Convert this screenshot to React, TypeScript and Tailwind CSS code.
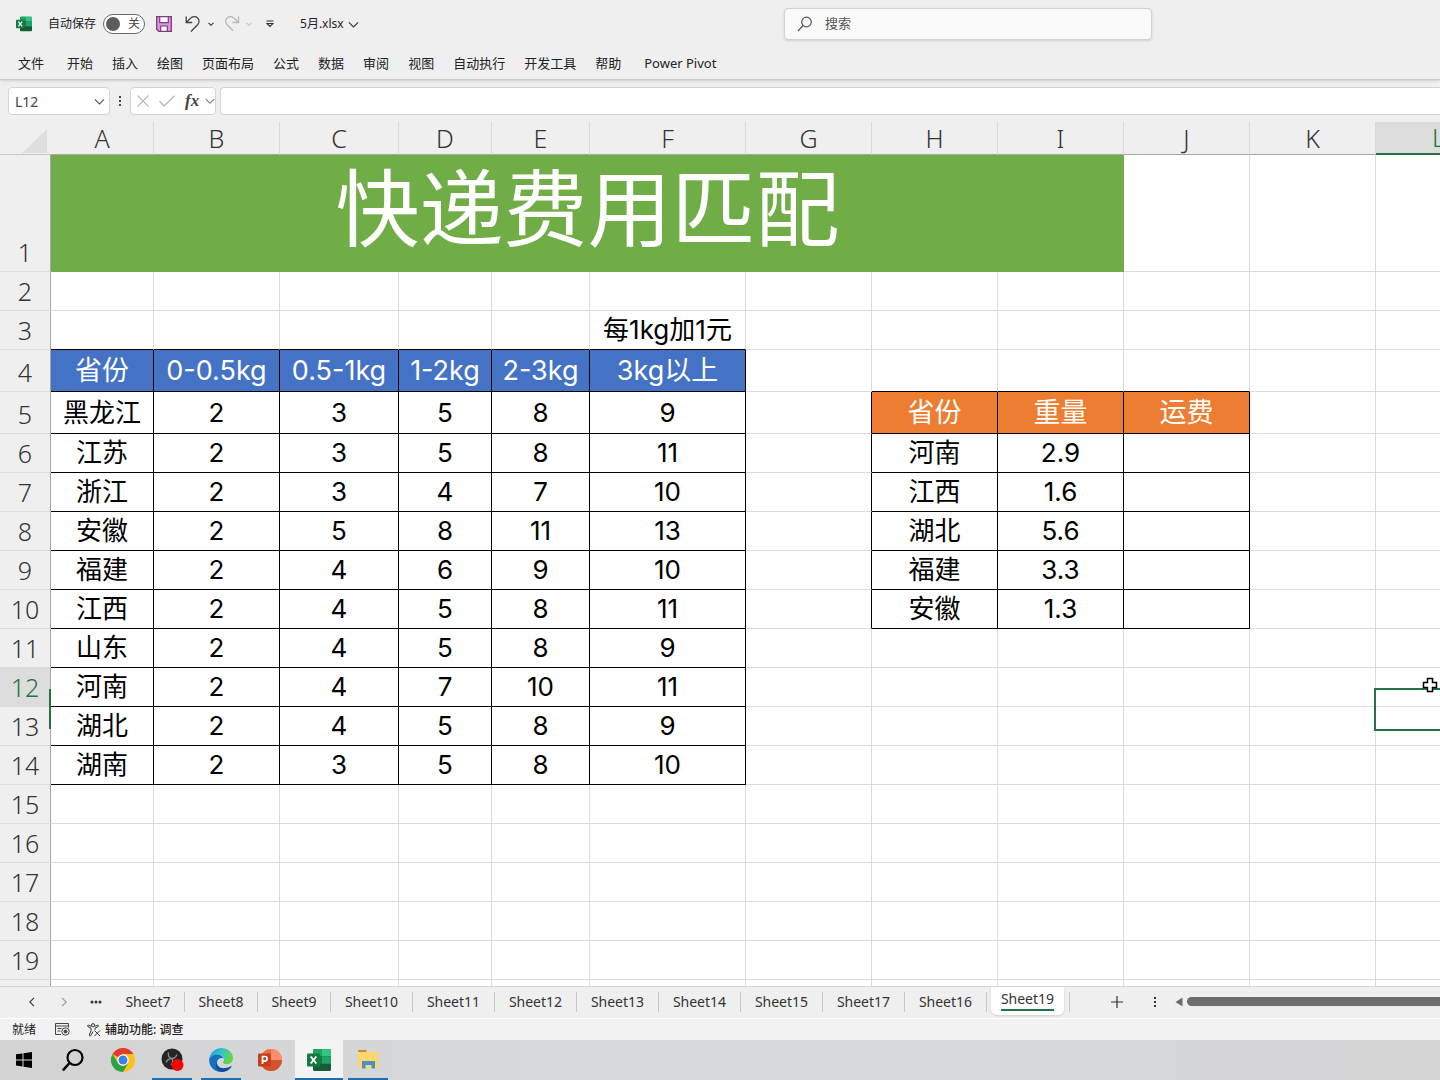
import React, { useState } from "react";

const MENUS = ["开始", "插入", "绘图", "页面布局", "公式", "数据", "审阅", "视图", "自动执行", "开发工具", "帮助"];

const COLUMNS = [
  { name: "A", width: "w-[103px]" },
  { name: "B", width: "w-[126px]" },
  { name: "C", width: "w-[119px]" },
  { name: "D", width: "w-[93px]" },
  { name: "E", width: "w-[98px]" },
  { name: "F", width: "w-[156px]" },
  { name: "G", width: "w-[126px]" },
  { name: "H", width: "w-[126px]" },
  { name: "I", width: "w-[126px]" },
  { name: "J", width: "w-[126px]" },
  { name: "K", width: "w-[126px]" },
  { name: "L", width: "w-[126px]" },
];

const PRICE_HEADER = ["省份", "0-0.5kg", "0.5-1kg", "1-2kg", "2-3kg", "3kg以上"];

// starts at row 5
const PRICES = [
  ["黑龙江", "2", "3", "5", "8", "9"],
  ["江苏", "2", "3", "5", "8", "11"],
  ["浙江", "2", "3", "4", "7", "10"],
  ["安徽", "2", "5", "8", "11", "13"],
  ["福建", "2", "4", "6", "9", "10"],
  ["江西", "2", "4", "5", "8", "11"],
  ["山东", "2", "4", "5", "8", "9"],
  ["河南", "2", "4", "7", "10", "11"],
  ["湖北", "2", "4", "5", "8", "9"],
  ["湖南", "2", "3", "5", "8", "10"],
];

// starts at row 5, column H
const ORDERS = [
  ["省份", "重量", "运费"],
  ["河南", "2.9", ""],
  ["江西", "1.6", ""],
  ["湖北", "5.6", ""],
  ["福建", "3.3", ""],
  ["安徽", "1.3", ""],
];

const SHEETS = ["Sheet7", "Sheet8", "Sheet9", "Sheet10", "Sheet11", "Sheet12", "Sheet13", "Sheet14", "Sheet15", "Sheet17", "Sheet16", "Sheet19"];

function ExcelLogo({ size }: { size: number }) {
  return (
    <svg width={size} height={size} viewBox="0 0 24 24" aria-hidden="true">
      <rect x="6" y="1" width="18" height="22" rx="1.500" fill="#185c37" />
      <path d="M7.500 1H15v7.300H6V2.500A1.500 1.500 0 0 1 7.500 1z" fill="#21a366" />
      <path d="M15 1h7.500A1.500 1.500 0 0 1 24 2.500v5.800h-9z" fill="#33c481" />
      <path d="M6 8.300h9v7.400H6z" fill="#107c41" />
      <path d="M15 8.300h9v7.400h-9z" fill="#21a366" />
      <rect x="0" y="5.500" width="13" height="13" rx="1.200" fill="#107c41" />
      <path d="M3.700 8.500l5.600 7M9.300 8.500l-5.600 7" stroke="#fff" strokeWidth="1.900" />
    </svg>
  );
}

function Chevron({ width, stroke = "#333" }: { width: number; stroke?: string }) {
  return (
    <svg width={width} height={width} viewBox="0 0 10 10" fill="none" aria-hidden="true">
      <path d="M.8 3l4.200 4.200L9.200 3" stroke={stroke} strokeWidth={11 / width} />
    </svg>
  );
}

function TitleBar() {
  const [autoSave, setAutoSave] = useState(false);

  return (
    <div className="flex h-12 items-center">
      <div className="flex w-[784px] shrink-0 items-center pl-4">
        <ExcelLogo size={16} />
        <label htmlFor="autosave" className="ml-4 text-[12px]">
          自动保存
        </label>
        <span className="ml-[7px] flex h-5 w-[42px] items-center justify-between rounded-full border border-[#666] bg-white pr-1 pl-0.5">
          <input
            id="autosave"
            type="checkbox"
            checked={autoSave}
            onChange={(e) => setAutoSave(e.target.checked)}
            className="size-[14px] appearance-none rounded-full bg-[#5d5d5d]"
          />
          <span className="text-[12px] text-[#444]">关</span>
        </span>
        <button aria-label="保存" className="ml-[11px]">
          <svg width="16" height="16" viewBox="0 0 16 16" fill="none">
            <path d="M.7.700h14.600v14.600H2.800L.7 13.200z" fill="#d79ae0" stroke="#80397b" strokeWidth="1.300" />
            <path d="M3.700.700h8.600v6H3.700zM4.700 10h6.600v5.300H4.700z" fill="#fff" stroke="#80397b" strokeWidth="1.200" />
          </svg>
        </button>
        <button aria-label="撤消" className="ml-[13px] flex items-center gap-[7px]">
          <svg width="16" height="18" viewBox="0 0 16 18" fill="none" stroke="#444" strokeWidth="1.300">
            <path d="M1.200 1.500v6h6M1.400 7.300l4-3.900c2.200-2.100 5.300-2.200 7.200-.4s1.900 4.700 0 6.700L6 16.500" />
          </svg>
          <Chevron width={6} />
        </button>
        <button aria-label="恢复" className="ml-2.5 flex items-center gap-1.5">
          <svg width="16" height="18" viewBox="0 0 16 18" fill="none" stroke="#b5b5b5" strokeWidth="1.300">
            <path d="M14.500 1.500v6h-6M14.300 7.300l-4-3.900C8.100 1.300 5 1.200 3.100 3s-1.900 4.700 0 6.700L9 15.800" />
          </svg>
          <Chevron width={6} stroke="#c4c4c4" />
        </button>
        <button aria-label="自定义快速访问工具栏" className="ml-3.5">
          <svg width="8" height="8" viewBox="0 0 8 8" fill="none" stroke="#333" strokeWidth="1.100">
            <path d="M.5 1h7M1 3.500l3 3 3-3z" />
          </svg>
        </button>
        <button className="ml-[26px] flex items-center gap-1 text-[12px] text-[#222]">
          5月.xlsx
          <Chevron width={11} />
        </button>
      </div>
      <div className="flex h-8 w-[368px] items-center rounded-sm border border-[#d2d2d2] bg-[#fafafa] pl-3 shadow-sm">
        <svg width="16" height="16" viewBox="0 0 16 16" fill="none" stroke="#555" strokeWidth="1.200" aria-hidden="true">
          <circle cx="9.500" cy="6" r="4.800" />
          <path d="M6 9.500L1 15" />
        </svg>
        <input
          aria-label="搜索"
          placeholder="搜索"
          className="ml-3 min-w-0 flex-1 text-[13px] outline-none placeholder:text-[#555]"
        />
      </div>
    </div>
  );
}

function MenuBar() {
  return (
    <nav className="flex h-[31px] items-center gap-[19px] pl-[18px] text-[13px] whitespace-nowrap">
      <button className="mr-1">文件</button>
      {MENUS.map((menu) => (
        <button key={menu}>{menu}</button>
      ))}
      <button className="ml-1">Power Pivot</button>
    </nav>
  );
}

function FormulaBar() {
  return (
    <div className="flex h-[42px] items-center pl-2">
      <div className="flex h-7 w-[102px] items-center rounded-sm border border-[#d4d4d4] bg-white pr-1 pl-1.5">
        <input aria-label="名称框" defaultValue="L12" className="min-w-0 flex-1 text-[14px] text-[#444] outline-none" />
        <Chevron width={11} stroke="#555" />
      </div>
      <svg width="4" height="12" viewBox="0 0 4 12" className="mx-2" fill="#444" aria-hidden="true">
        <path d="M1 1h2v2H1zM1 5h2v2H1zM1 9h2v2H1z" />
      </svg>
      <div className="flex h-7 w-[86px] items-center rounded-sm border border-[#d4d4d4] bg-white pl-1.5">
        <button aria-label="取消">
          <svg width="12" height="12" viewBox="0 0 12 12" stroke="#bbb" strokeWidth="1.200">
            <path d="M.5.500l11 11M11.500.500l-11 11" />
          </svg>
        </button>
        <button aria-label="输入" className="ml-2.5">
          <svg width="16" height="12" viewBox="0 0 16 12" fill="none" stroke="#bbb" strokeWidth="1.500">
            <path d="M.5 6l4.500 5L15.500.700" />
          </svg>
        </button>
        <button aria-label="插入函数" className="ml-2.5 font-['Liberation_Serif',serif] text-[17px] leading-5 font-bold text-[#444] italic">
          fx
        </button>
        <span className="ml-1.5">
          <Chevron width={10} stroke="#888" />
        </span>
      </div>
      <input aria-label="编辑栏" className="ml-1 h-7 flex-1 rounded-l-sm border border-r-0 border-[#d4d4d4] bg-white px-2 outline-none" />
    </div>
  );
}

const ROW_COUNT = 20;

function cellFor(row: number, col: number) {
  const prices = row >= 4 && row <= 14 && col <= 5;
  const orders = row >= 5 && row <= 10 && col >= 7 && col <= 9;
  const boxed = prices || orders;

  let text = "";
  if (row === 3 && col === 5) text = "每1kg加1元";
  if (prices) text = row === 4 ? PRICE_HEADER[col] : PRICES[row - 5][col];
  if (orders) text = ORDERS[row - 5][col - 7];

  // a cell draws only its right and bottom edges, so neighbours close the box
  const darkRight = boxed || (col === 6 && row >= 5 && row <= 10);
  const darkBottom = boxed || (row === 3 && col <= 5) || (row === 4 && col >= 7 && col <= 9);

  let tone = "text-[26px] text-black";
  if (row === 4 && prices) tone = "bg-[#4472c4] text-[27px] text-white";
  if (row === 5 && orders) tone = "bg-[#ed7d31] text-[27px] text-white";

  return { text, tone, darkRight, darkBottom };
}

function rowHeight(row: number) {
  if (row === 1) return "h-[117px]";
  if (row === 4 || row === 5) return "h-[42px]";
  return "h-[39px]";
}

function Grid() {
  return (
    <main className="relative min-h-0 flex-1 overflow-hidden bg-white">
      <table className="w-[1451px] table-fixed border-separate border-spacing-0">
        <thead>
          <tr className="h-[33px] bg-[#efefef]">
            <th className="w-[51px] border-b border-[#c6c6c6] p-0 align-bottom">
              <svg width="26" height="26" viewBox="0 0 26 26" className="ml-[22px]" aria-hidden="true">
                <path d="M25 1v24H0z" fill="#dedede" />
              </svg>
            </th>
            {COLUMNS.map(({ name, width }) => (
              <th
                key={name}
                className={`${width} border-r p-0 text-[25px] leading-[31px] font-light ${
                  name === "L"
                    ? "border-r-[#d9d9d9] border-b-2 border-b-[#217346] bg-[#dcdcdc] text-[#217346]"
                    : "border-b border-r-[#d9d9d9] border-b-[#a6a6a6] text-[#333]"
                }`}
              >
                {name}
              </th>
            ))}
          </tr>
        </thead>
        <tbody className="font-['Inter','Noto_Sans_CJK_SC',sans-serif]">
          {Array.from({ length: ROW_COUNT }, (_, i) => i + 1).map((row) => (
            <tr key={row} className={rowHeight(row)}>
              <th
                className={`border-r border-b border-r-[#a6a6a6] border-b-[#dcdcdc] p-0 align-bottom font-['Noto_Sans',sans-serif] text-[25px] leading-[38px] font-light ${
                  row === 12 ? "bg-[#dcdcdc] text-[#217346]" : "bg-[#efefef] text-[#333]"
                }`}
              >
                {row < ROW_COUNT && row}
              </th>
              {row === 1 && (
                <td colSpan={9} className="bg-[#70ad47] p-0 pb-2 text-center text-[84px] leading-[100px] text-white">
                  快递费用匹配
                </td>
              )}
              {COLUMNS.map(({ name }, col) => {
                if (row === 1 && col < 9) return null;
                const { text, tone, darkRight, darkBottom } = cellFor(row, col);
                return (
                  <td
                    key={name}
                    className={`border-r border-b p-0 text-center leading-8 whitespace-nowrap ${tone} ${
                      darkRight ? "border-r-black" : "border-r-[#dcdcdc]"
                    } ${darkBottom ? "border-b-black" : "border-b-[#dcdcdc]"}`}
                  >
                    {text}
                  </td>
                );
              })}
            </tr>
          ))}
        </tbody>
      </table>

      <div className="absolute top-[566px] left-[1374px] h-[43px] w-[128px] border-2 border-[#217346]" />
      <div className="absolute top-[567px] left-[49px] h-10 w-0.5 bg-[#217346]" />
      <svg width="16" height="16" viewBox="0 0 16 16" className="absolute top-[555px] left-[1422px]" aria-hidden="true">
        <path d="M5.500 1.500h5v4h4v5h-4v4h-5v-4h-4v-5h4z" fill="#fff" stroke="#000" strokeWidth="1.500" />
      </svg>
    </main>
  );
}

function SheetTabs() {
  const [active, setActive] = useState("Sheet19");

  return (
    <div className="flex h-8 items-center overflow-hidden border-t border-[#d4d4d4] bg-[#efefef] pb-0.5 text-[14px] text-[#333]">
      <div className="flex w-28 shrink-0 items-center pl-[27px]">
        <button aria-label="上一张" className="rotate-90">
          <Chevron width={10} />
        </button>
        <button aria-label="下一张" className="ml-[22px] -rotate-90">
          <Chevron width={10} stroke="#999" />
        </button>
        <button aria-label="更多工作表" className="ml-[21px]">
          <svg width="12" height="4" viewBox="0 0 12 4" fill="#333">
            <circle cx="2" cy="2" r="1.500" />
            <circle cx="6" cy="2" r="1.500" />
            <circle cx="10" cy="2" r="1.500" />
          </svg>
        </button>
      </div>
      {SHEETS.map((sheet) =>
        sheet === active ? (
          <button key={sheet} className="mr-[5px] ml-1 flex h-7 w-[73px] shrink-0 items-start justify-center self-start rounded-b-md bg-white pt-0.5 shadow-sm">
            <span className="border-b-2 border-[#217346] leading-5">{sheet}</span>
          </button>
        ) : (
          <button
            key={sheet}
            onClick={() => setActive(sheet)}
            className={`h-5 shrink-0 border-r border-[#c8c8c8] leading-5 ${sheet.length === 6 ? "w-[73px]" : "w-[82px]"}`}
          >
            {sheet}
          </button>
        ),
      )}
      <div className="h-5 w-px shrink-0 bg-[#c8c8c8]" />
      <button aria-label="新工作表" className="ml-[41px]">
        <svg width="12" height="12" viewBox="0 0 12 12" stroke="#333" strokeWidth="1.200">
          <path d="M6 0v12M0 6h12" />
        </svg>
      </button>
      <svg width="4" height="12" viewBox="0 0 4 12" className="ml-[30px] shrink-0" fill="#333" aria-hidden="true">
        <path d="M1 1h2v2H1zM1 5h2v2H1zM1 9h2v2H1z" />
      </svg>
      <svg width="8" height="10" viewBox="0 0 8 10" className="ml-[18px] shrink-0" fill="#6b6b6b" aria-hidden="true">
        <path d="M7.500.500v9L.5 5z" />
      </svg>
      <div className="ml-1 h-[9px] flex-1 rounded-l-full bg-[#6e6e6e]" />
    </div>
  );
}

function StatusBar() {
  return (
    <div className="flex h-[22px] items-center border-t border-white bg-[#f2f2f2] pl-3 text-[12px] text-[#222]">
      <span>就绪</span>
      <svg width="15" height="13" viewBox="0 0 15 13" className="ml-[19px]" fill="none" stroke="#444" aria-hidden="true">
        <path d="M6 11.500H.5V.500h13v4M.5 3h13M2.500 5.500h4M2.500 8h3" />
        <circle cx="10.500" cy="8.500" r="3.700" />
        <circle cx="10.500" cy="8.500" r="1.500" fill="#444" />
      </svg>
      <button className="ml-[17px] flex items-center gap-1 font-medium">
        <svg width="14" height="14" viewBox="0 0 14 14" fill="none" stroke="#333" aria-hidden="true">
          <circle cx="6" cy="2.200" r="1.600" />
          <path d="M4.200 3.300L1.500 2.200c-1-.2-1.400 1-.5 1.400l3 1.600v2.500L2.300 12c-.2 1 1 1.400 1.500.5L6 8.500M7.800 3.300l2.700-1.100c1-.2 1.400 1 .5 1.400L8 5.200v1.600M7.500 7.500l5.500 5.500M13 7.500L7.500 13" />
        </svg>
        辅助功能: 调查
      </button>
    </div>
  );
}

const TASKS = [
  {
    name: "开始",
    running: false,
    icon: (
      <svg width="18" height="18" viewBox="0 0 18 18" fill="#000">
        <path d="M0 3.300l6.500-.9v6H0zM7.500 2.200L16 1v7.400H7.500zM0 9.400h6.500v6L0 14.500zM7.500 9.400H16V17l-8.500-1.300z" />
      </svg>
    ),
  },
  {
    name: "搜索",
    running: false,
    icon: (
      <svg width="24" height="24" viewBox="0 0 24 24" fill="none" stroke="#000" strokeWidth="2.200">
        <circle cx="13" cy="9.500" r="7.500" />
        <path d="M7.500 15L.8 22.500" strokeWidth="2.600" />
      </svg>
    ),
  },
  {
    name: "Chrome",
    running: false,
    icon: (
      <svg width="24" height="24" viewBox="0 0 24 24">
        <circle cx="12" cy="12" r="12" fill="#fbc116" />
        <path d="M12 12L1.600 6A12 12 0 0 1 22.400 6H12z" fill="#e33b2e" />
        <path d="M1.600 6l5.300 9A6 6 0 0 0 12 18l5.200-3L12 24A12 12 0 0 1 1.600 6z" fill="#2aa24c" />
        <circle cx="12" cy="12" r="5.700" fill="#fff" />
        <circle cx="12" cy="12" r="4.500" fill="#3b82e8" />
      </svg>
    ),
  },
  {
    name: "OBS",
    running: true,
    icon: (
      <svg width="24" height="24" viewBox="0 0 24 24">
        <circle cx="12" cy="11" r="10.500" fill="#262427" />
        <path d="M8.500 4.500c-.8 3.400.8 5.500 3.500 6 2.500-.3 4.300-2 4.800-4M12 10.500c-3 .2-5 1.700-6 4M12 10.500c1.300 2.100.9 4.200-.8 6.500" stroke="#8b8b8b" strokeWidth="1.300" fill="none" />
        <circle cx="17.500" cy="17" r="6" fill="#f50505" />
      </svg>
    ),
  },
  {
    name: "Edge",
    running: true,
    icon: (
      <svg width="24" height="24" viewBox="0 0 24 24">
        <defs>
          <linearGradient id="edge-top" x1="0" y1="0" x2="1" y2="0.300">
            <stop offset="0" stopColor="#1d9fe0" />
            <stop offset="0.550" stopColor="#32c3d0" />
            <stop offset="1" stopColor="#65d548" />
          </linearGradient>
        </defs>
        <path d="M.3 10.500C1.500 4.200 6.300 0 12.300 0 19 0 24 4.600 24 10c0 3.800-2.800 6.200-6 6.200-2.600 0-4-.9-4-1.700 0-.7 1-1.200 1-3.200 0-2.800-2.800-4.800-6.200-4.800C5 6.500 2.300 8 .3 10.500z" fill="url(#edge-top)" />
        <path d="M.3 10.500C2 7.800 5 6.500 8.200 6.500c3.300 0 5.900 1.800 6.600 4-4-1.400-6.800 1.200-6.800 4.500 0 4.600 4.700 7.600 9.800 5.900C16.200 22.800 14.300 24 12 24 5 24-.8 18 .3 10.500z" fill="#1272c2" />
        <path d="M8 14.500c0 4.600 5 8 13.800 3.700.6-.3 1 .2.600.8C20.500 22 16.500 24 12.500 24 8 23.500 5.500 18.500 8 14.500z" fill="#114f9e" />
      </svg>
    ),
  },
  {
    name: "PowerPoint",
    running: false,
    icon: (
      <svg width="24" height="24" viewBox="0 0 24 24">
        <circle cx="13" cy="12" r="11" fill="#ed6c47" />
        <path d="M13 1a11 11 0 0 1 11 11H13z" fill="#ff8f6b" />
        <path d="M2 12h22a11 11 0 0 1-22 0z" fill="#d35230" />
        <rect x="0" y="5.500" width="13" height="13" rx="1.200" fill="#c43e1c" />
        <path d="M4.500 16V8.500h2.300a2.200 2.200 0 0 1 0 4.600H4.500" stroke="#fff" strokeWidth="1.700" fill="none" />
      </svg>
    ),
  },
  { name: "Excel", running: true, icon: <ExcelLogo size={24} /> },
  {
    name: "文件资源管理器",
    running: true,
    icon: (
      <svg width="24" height="24" viewBox="0 0 24 24">
        <path d="M2 2h8.500v3H2z" fill="#c98f1c" />
        <path d="M2 4h20.500v16H2z" fill="#f9d76f" />
        <path d="M6 20.500V13h13v7.500h-3.500V17h-6v3.500z" fill="#4a8fcb" />
      </svg>
    ),
  },
];

function Taskbar() {
  return (
    <footer className="flex h-10 gap-px bg-linear-to-r from-[#d3d3d3] via-[#d8dade] to-[#d5d5d6] pl-px">
      {TASKS.map(({ name, running, icon }) => (
        <button
          key={name}
          aria-label={name}
          className={`flex h-10 w-12 flex-col items-center ${name === "Excel" ? "bg-[#f3f3f3]" : ""}`}
        >
          <span className="flex flex-1 items-center pt-0.5">{icon}</span>
          <span className={`h-0.5 ${name === "Excel" ? "w-12" : "w-10"} ${running ? "bg-[#1a6fb5]" : ""}`} />
        </button>
      ))}
    </footer>
  );
}

export default function App() {
  return (
    <div className="flex h-screen flex-col overflow-hidden bg-[#efefef] font-['Noto_Sans','Noto_Sans_CJK_SC',sans-serif] text-[#222]">
      <header className="border-b border-[#c8c8c8] shadow-sm">
        <TitleBar />
        <MenuBar />
      </header>
      <FormulaBar />
      <Grid />
      <SheetTabs />
      <StatusBar />
      <Taskbar />
    </div>
  );
}
